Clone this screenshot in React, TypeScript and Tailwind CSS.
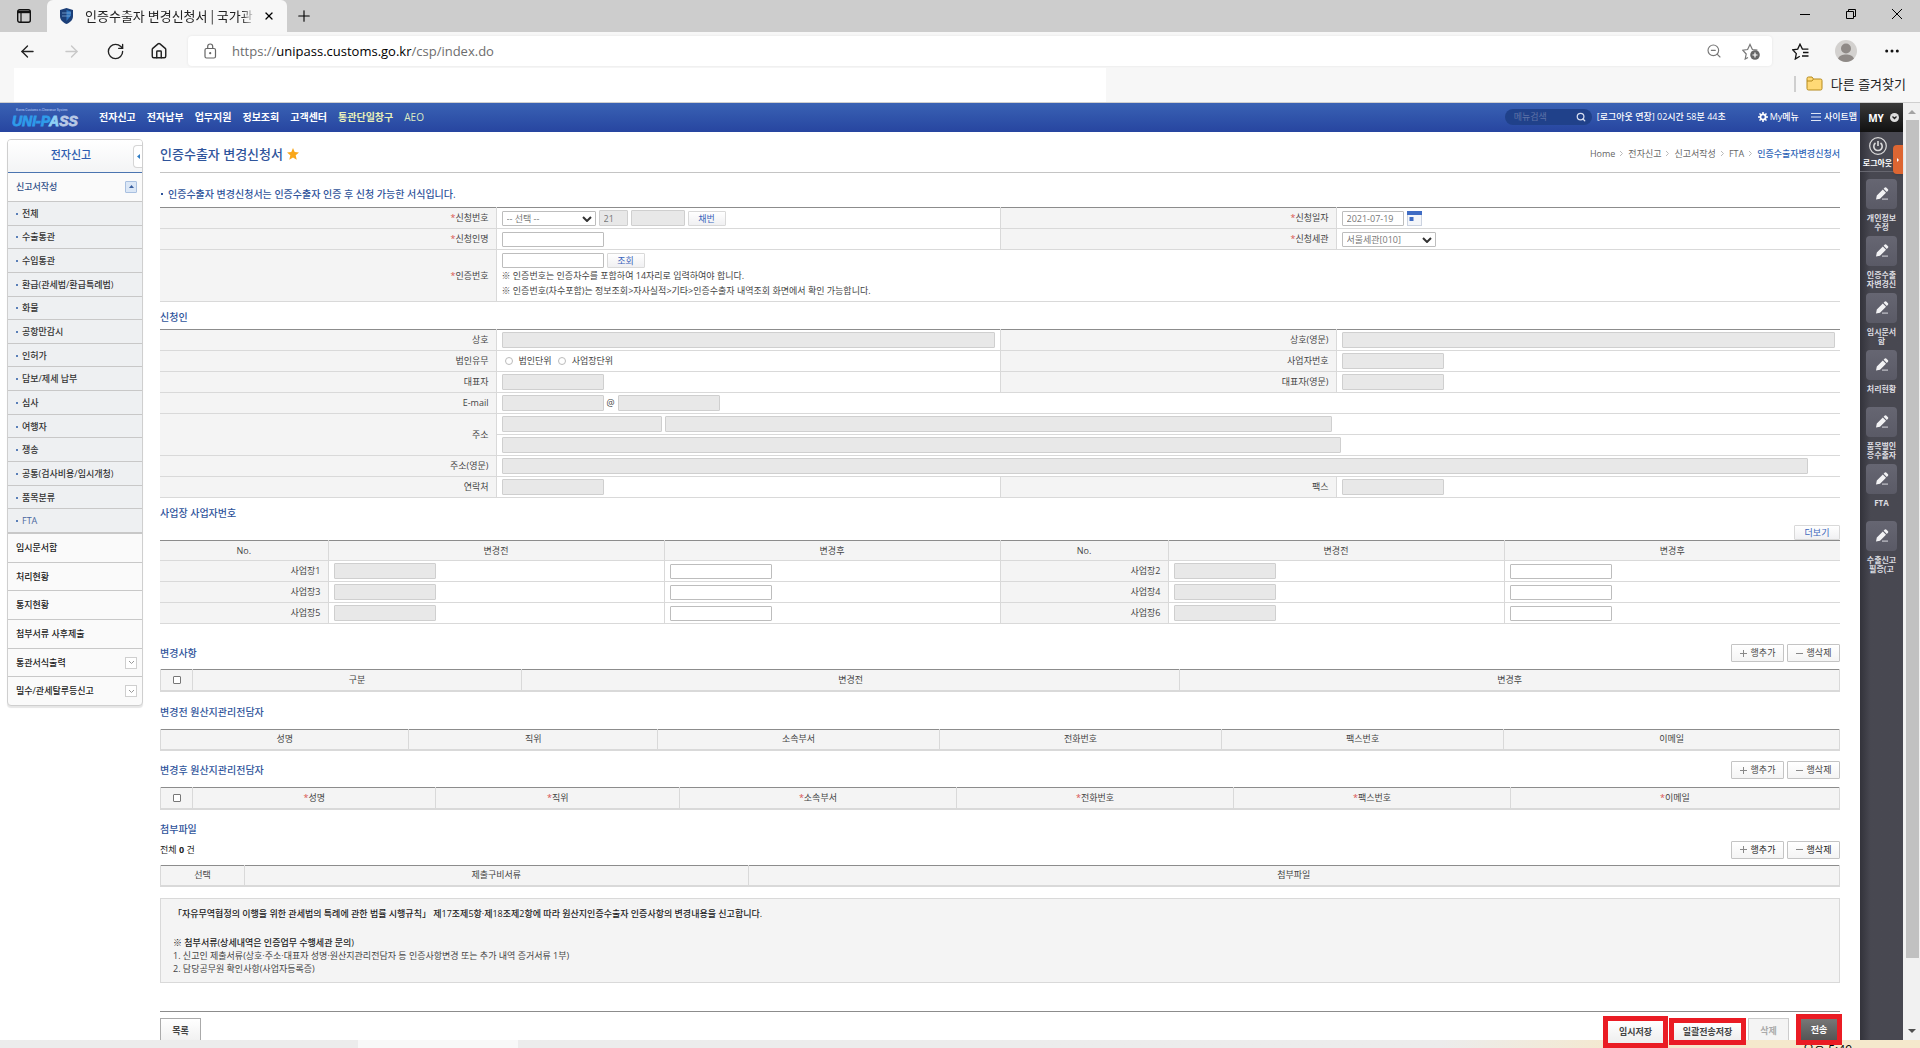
import type { ReactNode } from "react"
import { ArrowLeft, ArrowRight, House, Plus, RotateCw, Search, X, ZoomOut } from "lucide-react"

const topMenus = ["전자신고", "전자납부", "업무지원", "정보조회", "고객센터"]

const docMenus = [
  "전체",
  "수출통관",
  "수입통관",
  "환급(관세법/환급특례법)",
  "화물",
  "공항만감시",
  "인허가",
  "담보/제세 납부",
  "심사",
  "여행자",
  "쟁송",
  "공통(검사비용/임시개청)",
  "품목분류",
  "FTA",
]

const sideMenus = [
  { label: "임시문서함" },
  { label: "처리현황" },
  { label: "통지현황" },
  { label: "첨부서류 사후제출" },
  { label: "통관서식출력", sub: true },
  { label: "밀수/관세탈루등신고", sub: true },
]

const quickMenus = [
  ["개인정보", "수정"],
  ["인증수출", "자변경신"],
  ["임시문서", "함"],
  ["처리현황"],
  ["품목별인", "증수출자"],
  ["FTA"],
  ["수출신고", "필증(고"],
]

const thCls = "border-b border-[#d9d9d9] bg-[#f4f4f4] pr-[7px] text-right font-normal"
const th2Cls = "border-b border-x border-[#d9d9d9] bg-[#f4f4f4] pr-[7px] text-right font-normal"
const tdCls = "border-b border-l border-[#d9d9d9] pl-[5px]"
const grayInput = "h-4 rounded-[1px] border border-[#cfcfcf] bg-[#e8e8e8] px-1 align-middle text-[#777]"
const whiteInput = "h-[15px] rounded-[1px] border border-[#bdbdbd] bg-white px-1 align-middle text-[#777]"

function Req() {
  return <span className="text-[#d9534f]">*</span>
}

function SmallButton({ children, className = "" }: { children: ReactNode; className?: string }) {
  return (
    <button
      className={`h-[15px] rounded-[1px] border border-[#d9d9d9] bg-gradient-to-b from-white to-[#f0f0f2] align-middle leading-[13px] text-[#3c66bb] ${className}`}
    >
      {children}
    </button>
  )
}

function RowButtons() {
  return (
    <div className="flex gap-[3px]">
      <button className="flex h-[18px] w-[53px] items-center justify-center gap-1 rounded-[1px] border border-[#c4c4c4] bg-gradient-to-b from-white to-[#f4f4f4]">
        <svg className="h-[7px] w-[7px]" viewBox="0 0 7 7" stroke="#888">
          <path d="M3.5 0v7M0 3.5h7" />
        </svg>
        행추가
      </button>
      <button className="flex h-[18px] w-[53px] items-center justify-center gap-1 rounded-[1px] border border-[#c4c4c4] bg-gradient-to-b from-white to-[#f4f4f4]">
        <svg className="h-[7px] w-[7px]" viewBox="0 0 7 7" stroke="#888">
          <path d="M0 3.5h7" />
        </svg>
        행삭제
      </button>
    </div>
  )
}

function SectionTitle({ children }: { children: ReactNode }) {
  return <h2 className="text-[10px] leading-4 font-medium text-[#2f549b]">{children}</h2>
}

type Column = { label?: string; width: string; req?: boolean }

function GridTable({ name, columns }: { name: string; columns: Column[] }) {
  return (
    <table className="w-full table-fixed border-t border-t-[#8c8c8c]" aria-label={name}>
      <thead>
        <tr className="h-[21px]">
          {columns.map((c, i) => (
            <th key={i} className={`border-x border-b-2 border-[#d9d9d9] bg-[#f4f4f4] font-normal ${c.width}`}>
              {c.label ? (
                <>
                  {c.req && <Req />}
                  {c.label}
                </>
              ) : (
                <input
                  type="checkbox"
                  aria-label={`${name} 전체선택`}
                  className="mx-auto block h-2 w-2 appearance-none rounded-[1px] border border-[#777] bg-white"
                />
              )}
            </th>
          ))}
        </tr>
      </thead>
    </table>
  )
}

function PlaceCells({ n }: { n: number }) {
  return (
    <>
      <th className={n % 2 ? thCls : th2Cls}>사업장{n}</th>
      <td className={tdCls}>
        <input className={`${grayInput} block w-[102px]`} aria-label={`사업장${n} 변경전`} disabled />
      </td>
      <td className={tdCls}>
        <input className={`${whiteInput} block w-[102px]`} aria-label={`사업장${n} 변경후`} />
      </td>
    </>
  )
}

function BrowserChrome() {
  return (
    <header className="shrink-0 border-b border-[#cfcfcf] bg-[#f7f7f7]">
      <div className="flex h-8 items-end bg-[#cdcdcd]">
        <button className="flex h-8 w-[47px] items-center justify-center" aria-label="탭 작업 메뉴">
          <svg className="h-[14px] w-[14px]" viewBox="0 0 14 14" fill="none" stroke="#111">
            <rect x="0.7" y="0.7" width="12.6" height="12.6" rx="2" strokeWidth="1.4" />
            <path d="M1 3h12" strokeWidth="2.4" />
            <path d="M4 4v9" strokeWidth="1.2" />
          </svg>
        </button>
        <div className="flex h-8 w-60 items-center rounded-t-md bg-[#f7f7f7] px-3">
          <svg className="h-4 w-[15px] shrink-0" viewBox="0 0 15 16">
            <path d="M7.5 0 14 2v6c0 4-3 6.500-6.500 8C4 14.500 1 12 1 8V2z" fill="#1c3f78" />
            <path d="M7.500 2 12 3.500v4L7.500 13z" fill="#2f74bd" />
            <path d="M3 5h9M3 8h8" stroke="#7fa8d6" strokeWidth="0.8" />
          </svg>
          <span className="ml-[11px] w-[172px] overflow-hidden font-['Noto_Sans_CJK_KR',sans-serif] text-[13px] leading-5 whitespace-nowrap text-[#222] [mask-image:linear-gradient(to_right,black_92%,transparent)]">
            인증수출자 변경신청서 | 국가관
          </span>
          <button className="ml-2" aria-label="탭 닫기">
            <X className="h-3 w-3 text-black" strokeWidth={2.5} />
          </button>
        </div>
        <button className="ml-2 flex h-8 items-center" aria-label="새 탭">
          <Plus className="h-[18px] w-[18px] text-black" strokeWidth={1.5} />
        </button>
        <div className="ml-auto flex h-8 items-center pb-1 text-black">
          <button className="flex w-[46px] justify-center" aria-label="최소화">
            <svg className="h-[10px] w-[10px]" viewBox="0 0 10 10" stroke="currentColor">
              <path d="M0 5.500h10" />
            </svg>
          </button>
          <button className="flex w-[46px] justify-center" aria-label="이전 크기로 복원">
            <svg className="h-[10px] w-[10px]" viewBox="0 0 10 10" fill="none" stroke="currentColor">
              <path d="M0.500 2.500h7v7h-7zM2.500 2.500v-2h7v7h-2" />
            </svg>
          </button>
          <button className="flex w-[46px] justify-center" aria-label="닫기">
            <svg className="h-[10px] w-[10px]" viewBox="0 0 10 10" stroke="currentColor">
              <path d="M0 0l10 10M10 0L0 10" />
            </svg>
          </button>
        </div>
      </div>

      <div className="flex h-9 items-center pt-[2px]">
        <div className="flex w-[188px] items-center gap-[25px] pl-[18px] text-[#222]">
          <ArrowLeft className="h-[19px] w-[19px]" strokeWidth={1.7} />
          <ArrowRight className="h-[19px] w-[19px] text-[#c8c8c8]" strokeWidth={1.7} />
          <RotateCw className="h-[19px] w-[19px]" strokeWidth={1.7} />
          <House className="h-[18px] w-[18px]" strokeWidth={1.9} />
        </div>
        <div className="flex h-[30px] flex-1 items-center rounded bg-white pr-3 pl-[14px] shadow-[0_0_3px_rgba(0,0,0,0.08)]">
          <svg className="h-4 w-4" viewBox="0 0 16 16" fill="none" stroke="#666" strokeWidth="1.200">
            <rect x="3" y="5.500" width="10.500" height="9.500" rx="1.500" />
            <path d="M5.700 5.500V3.500q0-2.500 2.500-2.500t2.500 2.500v2" />
            <circle cx="8.200" cy="10.200" r="0.500" fill="#666" />
          </svg>
          <div className="ml-[14px] flex-1 text-[13px] leading-5 text-[#6d6d6d]">
            https://<span className="text-black">unipass.customs.go.kr</span>/csp/index.do
          </div>
          <ZoomOut className="h-4 w-4 text-[#777]" strokeWidth={1.7} />
          <svg className="ml-5 h-[18px] w-[18px]" viewBox="0 0 18 18" fill="none" stroke="#777" strokeWidth="1.2">
            <path d="M6 15.500l-2.800 1.500 1-5L0.700 8.200l4.900-.700L8 2.500l2.400 5 5 .7" />
            <circle cx="13" cy="13" r="4.800" fill="#666" stroke="none" />
            <path d="M13 10.500v5M10.500 13h5" stroke="#fff" />
          </svg>
        </div>
        <div className="flex w-[148px] items-center pl-5">
          <svg className="h-[17px] w-[17px]" viewBox="0 0 17 17" fill="none" stroke="#111" strokeWidth="1.3">
            <path d="M7.800 13.200L3.300 16l1-5.400L0.700 6.800l5-.7L8 1.200l2.400 4.900h6M11 9.500h5.500M10 13h6.500" />
          </svg>
          <svg className="ml-[26px] h-[22px] w-[22px]" viewBox="0 0 22 22">
            <circle cx="11" cy="11" r="11" fill="#d3d1cf" />
            <circle cx="11" cy="8.500" r="5" fill="#8f8a87" />
            <path d="M3 18.500c2-5.500 14-5.500 16 0a11 11 0 0 1-16 0z" fill="#8f8a87" />
          </svg>
          <svg className="ml-7 h-1 w-[14px]" viewBox="0 0 14 4" fill="#111">
            <circle cx="1.700" cy="2" r="1.500" />
            <circle cx="7" cy="2" r="1.500" />
            <circle cx="12.300" cy="2" r="1.500" />
          </svg>
        </div>
      </div>

      <div className="flex h-[34px] items-center pl-[14px]">
        <div className="h-[34px] w-[57.3%] bg-white" />
        <div className="mr-[14px] mb-[3px] ml-auto flex items-center border-l-2 border-[#cfcfcf] pl-[10px] text-[13px] leading-4 text-[#222]">
          <svg className="mr-2 h-[15px] w-[17px]" viewBox="0 0 17 15">
            <path d="M1 2.500Q1 1 2.500 1H6l1.500 2h7Q16 3 16 4.500v8q0 1.500-1.500 1.500h-12Q1 14 1 12.500z" fill="#ffd976" stroke="#b58a1d" />
            <path d="M1 5h5l1.500-2" fill="none" stroke="#b58a1d" />
          </svg>
          다른 즐겨찾기
        </div>
      </div>
    </header>
  )
}

function Logo() {
  return (
    <a href="#" className="flex h-[29px] w-[99px] items-center pt-[2px] pl-3" aria-label="UNI-PASS">
      <svg className="h-[22px] w-[72px]" viewBox="0 0 72 22">
        <text x="4" y="4" fontSize="3" fill="#9fb9ea" fontFamily="Liberation Sans, sans-serif">
          Korea Customs e-Clearance System
        </text>
        <text x="0" y="19" fontSize="14" fontWeight="700" fontStyle="italic" fill="#2f9bea" stroke="#2f9bea" strokeWidth="0.8" fontFamily="Liberation Sans, sans-serif">
          UNI-P<tspan fill="#8fd0f5" stroke="#8fd0f5">A</tspan><tspan fill="#b9c9e6" stroke="#b9c9e6">SS</tspan>
        </text>
      </svg>
    </a>
  )
}

function TopBar() {
  return (
    <nav className="flex h-[29px] items-center bg-gradient-to-b from-[#3a62b4] to-[#2745a0] pb-[2px] text-[10px] font-bold text-white">
      <Logo />
      <ul className="flex gap-[11px]">
        {topMenus.map((m) => (
          <li key={m}>
            <a href="#">{m}</a>
          </li>
        ))}
        <li>
          <a href="#" className="text-[#e9f0b8]">통관단일창구</a>
        </li>
        <li>
          <a href="#" className="font-medium text-[#dcebc4]">AEO</a>
        </li>
      </ul>
      <div className="ml-auto flex items-center pr-[3px] text-[9px] font-medium">
        <div className="flex h-4 w-[87px] items-center rounded-full bg-[#20418a] pr-[6px] pl-[9px]">
          <input
            aria-label="메뉴검색"
            placeholder="메뉴검색"
            className="w-0 flex-1 bg-transparent font-normal outline-none placeholder:text-[#5f73a8]"
          />
          <Search className="h-[10px] w-[10px] text-[#d7def0]" strokeWidth={3} />
        </div>
        <a href="#" className="ml-[5px]">[로그아웃 연장] 02시간 58분 44초</a>
        <a href="#" className="ml-8 flex items-center gap-[2px]">
          <svg className="h-[10px] w-[10px]" viewBox="0 0 10 10" fill="none" stroke="#fff">
            <circle cx="5" cy="5" r="2.600" strokeWidth="1.800" />
            <path d="M5 0v2M5 8v2M0 5h2M8 5h2M1.500 1.500l1.300 1.300M7.200 7.200l1.300 1.300M8.500 1.500L7.200 2.800M2.800 7.200L1.500 8.500" strokeWidth="1.500" />
          </svg>
          My메뉴
        </a>
        <a href="#" className="ml-3 flex items-center gap-[3px]">
          <svg className="h-2 w-[10px]" viewBox="0 0 10 8" stroke="#dfe6f5">
            <path d="M0 .5h10M0 4h10M0 7.500h10" />
          </svg>
          사이트맵
        </a>
      </div>
    </nav>
  )
}

function Sidebar() {
  return (
    <aside className="w-[136px] shrink-0 self-start overflow-hidden rounded border border-[#cfcfcf] bg-[#fafafa] font-medium text-[#333] shadow-[0_2px_1px_#e6e6e6]">
      <div className="relative flex h-[33px] items-center border-b border-[#4a74b0] bg-gradient-to-b from-white to-[#f3f4f5] pb-[2px]">
        <h2 className="flex-1 pr-2 text-center text-[11px] text-[#2d5cb0]">
          전자신고
        </h2>
        <button
          className="absolute top-[5px] right-0 flex h-[23px] w-[9px] items-center justify-center rounded-l-sm border border-r-0 border-[#d5d5d5] bg-white"
          aria-label="메뉴 접기"
        >
          <svg className="h-[5px] w-[3px]" viewBox="0 0 3 5" fill="#2f7cc4">
            <path d="M3 0v5L0 2.500z" />
          </svg>
        </button>
      </div>
      <div className="flex h-[29px] items-center justify-between border-b border-[#c8c8c8] pr-[5px] pb-px pl-2 text-[#2f4f88]">
        신고서작성
        <button className="flex h-3 w-3 items-center justify-center rounded-[1px] border border-[#a9c0e0] bg-[#dbe7f6]" aria-label="접기">
          <svg className="h-[3px] w-[5px]" viewBox="0 0 5 3" fill="#3a5f9e">
            <path d="M0 3h5L2.500 0z" />
          </svg>
        </button>
      </div>
      <ul className="flex min-h-[332px] flex-col border-b-2 border-[#c8c8c8] bg-[#eef0f2]">
        {docMenus.map((m) => (
          <li key={m} className="flex flex-1 items-center border-b border-[#c8c8c8] pt-px pl-2 last:border-b-0">
            <span className="mr-1 h-[2px] w-[2px] bg-[#5a7fb8]" />
            <a href="#" className={m === "FTA" ? "text-[#4a66a0]" : ""}>{m}</a>
          </li>
        ))}
      </ul>
      <ul className="flex min-h-[171px] flex-col text-[#222]">
        {sideMenus.map((m) => (
          <li key={m.label} className="flex flex-1 items-center justify-between border-b border-[#c8c8c8] pr-[5px] pl-2 last:border-b-0">
            <a href="#">{m.label}</a>
            {m.sub && (
              <span className="flex h-3 w-3 items-center justify-center border border-[#cfcfcf] bg-white">
                <svg className="h-[3px] w-[5px]" viewBox="0 0 5 3" fill="none" stroke="#999">
                  <path d="M0 0l2.500 2.500L5 0" />
                </svg>
              </span>
            )}
          </li>
        ))}
      </ul>
    </aside>
  )
}

function Select({ id, value }: { id: string; value: string }) {
  return (
    <span className="relative inline-flex align-middle">
      <select id={id} className="h-[15px] w-[94px] appearance-none rounded-[1px] border border-[#bdbdbd] bg-white pl-1 leading-[13px] text-[#777]">
        <option>{value}</option>
      </select>
      <svg className="pointer-events-none absolute top-[5px] right-1 h-[6px] w-[10px]" viewBox="0 0 10 6" fill="none" stroke="#333" strokeWidth="2">
        <path d="M1 1l4 4 4-4" />
      </svg>
    </span>
  )
}

function ApplyForm() {
  return (
    <table className="mt-[5px] w-full table-fixed border-t border-[#8c8c8c]">
      <colgroup>
        <col className="w-[20%]" />
        <col className="w-[30%]" />
        <col className="w-[20%]" />
        <col className="w-[30%]" />
      </colgroup>
      <tbody>
        <tr className="h-[21px]">
          <th className={thCls}><Req /><label htmlFor="applyNo">신청번호</label></th>
          <td className={tdCls}>
            <div className="flex items-center gap-[3px]">
              <Select id="applyNo" value="-- 선택 --" />
              <input className={`${grayInput} w-[29px]`} aria-label="신청번호 연도" defaultValue="21" disabled />
              <input className={`${grayInput} w-[54px]`} aria-label="신청번호 일련번호" disabled />
              <SmallButton className="w-[38px]">채번</SmallButton>
            </div>
          </td>
          <th className={th2Cls}><Req /><label htmlFor="applyDate">신청일자</label></th>
          <td className={tdCls}>
            <div className="flex items-center gap-[3px]">
              <input id="applyDate" className={`${whiteInput} w-[62px]`} defaultValue="2021-07-19" />
              <button aria-label="달력">
                <svg className="h-[15px] w-[15px]" viewBox="0 0 15 15">
                  <rect x="0.500" y="0.500" width="14" height="14" fill="#f4f6fa" stroke="#ccd3e0" />
                  <rect width="15" height="4" fill="#3f6cc4" />
                  <rect x="2.500" y="6" width="4" height="4" fill="#3f6cc4" />
                </svg>
              </button>
            </div>
          </td>
        </tr>
        <tr className="h-[21px]">
          <th className={thCls}><Req /><label htmlFor="applicant">신청인명</label></th>
          <td className={tdCls}>
            <input id="applicant" className={`${whiteInput} block w-[102px]`} />
          </td>
          <th className={th2Cls}><Req /><label htmlFor="customs">신청세관</label></th>
          <td className={tdCls}>
            <div className="flex">
              <Select id="customs" value="서울세관[010]" />
            </div>
          </td>
        </tr>
        <tr className="h-[52px]">
          <th className={thCls}><Req /><label htmlFor="certNo">인증번호</label></th>
          <td className={tdCls} colSpan={3}>
            <div className="flex items-center gap-[3px]">
              <input id="certNo" className={`${whiteInput} w-[102px]`} />
              <SmallButton className="w-[38px]">조회</SmallButton>
            </div>
            <p className="leading-[15px]">※ 인증번호는 인증차수를 포함하여 14자리로 입력하여야 합니다.</p>
            <p className="leading-[15px]">※ 인증번호(차수포함)는 정보조회&gt;자사실적&gt;기타&gt;인증수출자 내역조회 화면에서 확인 가능합니다.</p>
          </td>
        </tr>
      </tbody>
    </table>
  )
}

function ApplicantForm() {
  return (
    <table className="mt-1 w-full table-fixed border-t border-[#8c8c8c]">
      <colgroup>
        <col className="w-[20%]" />
        <col className="w-[30%]" />
        <col className="w-[20%]" />
        <col className="w-[30%]" />
      </colgroup>
      <tbody>
        <tr className="h-[21px]">
          <th className={thCls}><label htmlFor="firm">상호</label></th>
          <td className={`${tdCls} pr-[5px]`}><input id="firm" className={`${grayInput} block w-full`} disabled /></td>
          <th className={th2Cls}><label htmlFor="firmEn">상호(영문)</label></th>
          <td className={`${tdCls} pr-[5px]`}><input id="firmEn" className={`${grayInput} block w-full`} disabled /></td>
        </tr>
        <tr className="h-[21px]">
          <th className={thCls}>법인유무</th>
          <td className={tdCls}>
            <div className="flex items-center gap-[6px] pl-[3px]">
              <input id="corp" type="radio" name="unit" className="h-2 w-2 appearance-none rounded-full border border-[#bbb]" disabled />
              <label htmlFor="corp">법인단위</label>
              <input id="place" type="radio" name="unit" className="h-2 w-2 appearance-none rounded-full border border-[#bbb]" disabled />
              <label htmlFor="place">사업장단위</label>
            </div>
          </td>
          <th className={th2Cls}><label htmlFor="bizNo">사업자번호</label></th>
          <td className={tdCls}><input id="bizNo" className={`${grayInput} block w-[102px]`} disabled /></td>
        </tr>
        <tr className="h-[21px]">
          <th className={thCls}><label htmlFor="ceo">대표자</label></th>
          <td className={tdCls}><input id="ceo" className={`${grayInput} block w-[102px]`} disabled /></td>
          <th className={th2Cls}><label htmlFor="ceoEn">대표자(영문)</label></th>
          <td className={tdCls}><input id="ceoEn" className={`${grayInput} block w-[102px]`} disabled /></td>
        </tr>
        <tr className="h-[21px]">
          <th className={thCls}><label htmlFor="mail">E-mail</label></th>
          <td className={tdCls} colSpan={3}>
            <div className="flex items-center gap-[3px]">
              <input id="mail" className={`${grayInput} w-[102px]`} disabled />
              @
              <input className={`${grayInput} w-[102px]`} aria-label="E-mail 도메인" disabled />
            </div>
          </td>
        </tr>
        <tr className="h-[21px]">
          <th className={thCls} rowSpan={2}><label htmlFor="addr">주소</label></th>
          <td className={tdCls} colSpan={3}>
            <div className="flex gap-[3px]">
              <input id="addr" className={`${grayInput} w-[12%]`} disabled />
              <input className={`${grayInput} w-[49.8%]`} aria-label="기본주소" disabled />
            </div>
          </td>
        </tr>
        <tr className="h-[21px]">
          <td className={tdCls} colSpan={3}>
            <input className={`${grayInput} block w-[62.7%]`} aria-label="상세주소" disabled />
          </td>
        </tr>
        <tr className="h-[21px]">
          <th className={thCls}><label htmlFor="addrEn">주소(영문)</label></th>
          <td className={tdCls} colSpan={3}>
            <input id="addrEn" className={`${grayInput} block w-[97.6%]`} disabled />
          </td>
        </tr>
        <tr className="h-[21px]">
          <th className={thCls}><label htmlFor="tel">연락처</label></th>
          <td className={tdCls}><input id="tel" className={`${grayInput} block w-[102px]`} disabled /></td>
          <th className={th2Cls}><label htmlFor="fax">팩스</label></th>
          <td className={tdCls}><input id="fax" className={`${grayInput} block w-[102px]`} disabled /></td>
        </tr>
      </tbody>
    </table>
  )
}

function PlaceTable() {
  const head = "border-b border-[#d9d9d9] bg-[#f4f4f4] font-normal"
  return (
    <table className="w-full table-fixed border-t border-t-[#8c8c8c]">
      <thead>
        <tr className="h-5">
          <th className={`${head} w-[10%]`}>No.</th>
          <th className={`${head} w-[20%] border-l`}>변경전</th>
          <th className={`${head} w-[20%] border-l`}>변경후</th>
          <th className={`${head} w-[10%] border-l`}>No.</th>
          <th className={`${head} w-[20%] border-l`}>변경전</th>
          <th className={`${head} w-[20%] border-l`}>변경후</th>
        </tr>
      </thead>
      <tbody>
        {[1, 3, 5].map((n) => (
          <tr key={n} className="h-[21px]">
            <PlaceCells n={n} />
            <PlaceCells n={n + 1} />
          </tr>
        ))}
      </tbody>
    </table>
  )
}

function Breadcrumb() {
  const sep = (
    <svg className="h-[5px] w-[3px]" viewBox="0 0 3 5" fill="none" stroke="#bbb">
      <path d="M0 0l2.500 2.500L0 5" />
    </svg>
  )
  return (
    <div className="flex items-center gap-[5px] text-[#666]">
      <a href="#">Home</a>{sep}
      <a href="#">전자신고</a>{sep}
      <a href="#">신고서작성</a>{sep}
      <a href="#">FTA</a>{sep}
      <a href="#" className="font-medium text-[#2f66b8]">인증수출자변경신청서</a>
    </div>
  )
}

function Content() {
  return (
    <main className="min-w-0 flex-1 pr-5 pl-[17px]">
      <div className="flex h-[34px] items-center justify-between border-b border-[#c4c4c4] pb-1">
        <h1 className="flex items-center gap-1 text-[13px] font-medium text-[#2f549b]">
          인증수출자 변경신청서
          <svg className="h-3 w-3" viewBox="0 0 12 12" fill="#f9a71a">
            <path d="M6 0l1.700 4 4.300.4L8.700 7.300l1 4.400L6 9.400l-3.700 2.300 1-4.400L0 4.400 4.300 4z" />
          </svg>
        </h1>
        <Breadcrumb />
      </div>

      <div className="mt-[13px] flex items-center">
        <span className="mr-[5px] ml-[1px] h-[2px] w-[2px] bg-[#2f549b]" />
        <SectionTitle>인증수출자 변경신청서는 인증수출자 인증 후 신청 가능한 서식입니다.</SectionTitle>
      </div>
      <ApplyForm />

      <div className="mt-[7px]">
        <SectionTitle>신청인</SectionTitle>
      </div>
      <ApplicantForm />

      <div className="mt-[7px]">
        <SectionTitle>사업장 사업자번호</SectionTitle>
      </div>
      <div className="mt-1 flex justify-end">
        <SmallButton className="w-[46px]">더보기</SmallButton>
      </div>
      <PlaceTable />

      <div className="mt-5 mb-[7px] flex items-center justify-between">
        <SectionTitle>변경사항</SectionTitle>
        <RowButtons />
      </div>
      <GridTable
        name="변경사항"
        columns={[
          { width: "w-8" },
          { label: "구분", width: "w-[19.6%]" },
          { label: "변경전", width: "w-[39.2%]" },
          { label: "변경후", width: "w-auto" },
        ]}
      />

      <div className="mt-3 mb-[9px]">
        <SectionTitle>변경전 원산지관리전담자</SectionTitle>
      </div>
      <GridTable
        name="변경전 원산지관리전담자"
        columns={[
          { label: "성명", width: "w-[14.8%]" },
          { label: "직위", width: "w-[14.8%]" },
          { label: "소속부서", width: "w-[16.8%]" },
          { label: "전화번호", width: "w-[16.8%]" },
          { label: "팩스번호", width: "w-[16.8%]" },
          { label: "이메일", width: "w-auto" },
        ]}
      />

      <div className="mt-[10px] mb-2 flex items-center justify-between">
        <SectionTitle>변경후 원산지관리전담자</SectionTitle>
        <RowButtons />
      </div>
      <GridTable
        name="변경후 원산지관리전담자"
        columns={[
          { width: "w-8" },
          { label: "성명", width: "w-[14.5%]", req: true },
          { label: "직위", width: "w-[14.5%]", req: true },
          { label: "소속부서", width: "w-[16.5%]", req: true },
          { label: "전화번호", width: "w-[16.5%]", req: true },
          { label: "팩스번호", width: "w-[16.5%]", req: true },
          { label: "이메일", width: "w-auto", req: true },
        ]}
      />

      <div className="mt-[11px]">
        <SectionTitle>첨부파일</SectionTitle>
      </div>
      <div className="mt-1 mb-[6px] flex items-center justify-between text-[#222]">
        <span>전체 <b>0</b> 건</span>
        <RowButtons />
      </div>
      <GridTable
        name="첨부파일"
        columns={[
          { label: "선택", width: "w-[5%]" },
          { label: "제출구비서류", width: "w-[30%]" },
          { label: "첨부파일", width: "w-auto" },
        ]}
      />

      <section className="mt-[11px] border border-[#d9d9d9] bg-[#f4f4f4] px-3 pt-2 pb-[7px] leading-[13px]">
        <p className="font-medium text-[#222]">「자유무역협정의 이행을 위한 관세법의 특례에 관한 법률 시행규칙」 제17조제5항·제18조제2항에 따라 원산지인증수출자 인증사항의 변경내용을 신고합니다.</p>
        <p className="mt-4 font-medium text-[#222]">※ 첨부서류(상세내역은 인증업무 수행세관 문의)</p>
        <p>1. 신고인 제출서류(상호·주소·대표자 성명·원산지관리전담자 등 인증사항변경 또는 추가 내역 증거서류 1부)</p>
        <p>2. 담당공무원 확인사항(사업자등록증)</p>
      </section>

      <div className="mt-7 flex items-start justify-between border-t border-[#8c8c8c] font-bold">
        <button className="mt-[6px] h-7 w-[41px] border border-[#aaa] bg-gradient-to-b from-white to-[#eee] pb-[2px]">
          목록
        </button>
        <div className="-mr-[2px] flex items-start">
          <span className="relative z-20 mt-1 border-[5px] border-[#ea1c24]">
            <button className="block h-[22px] w-[55px] bg-gradient-to-b from-white to-[#eee]">임시저장</button>
          </span>
          <span className="relative z-20 mt-[6px] ml-px border-[5px] border-[#ea1c24]">
            <button className="block h-[17px] w-[67px] bg-gradient-to-b from-white to-[#eee]">일괄전송저장</button>
          </span>
          <button className="mt-[6px] ml-[2px] h-7 w-[41px] border border-[#ccc] bg-[#f4f4f4] pb-[2px] text-[#aaa]" disabled>
            삭제
          </button>
          <span className="relative z-20 mt-[2px] ml-[7px] border-[5px] border-[#ea1c24]">
            <button className="block h-[21px] w-[36px] bg-gradient-to-b from-[#777] to-[#555] text-white">전송</button>
          </span>
        </div>
      </div>
    </main>
  )
}

function QuickBar() {
  return (
    <aside className="relative w-[43px] shrink-0 bg-gradient-to-r from-[#33333b] to-[#484851] to-25% font-bold text-white">
      <div className="flex h-[29px] items-center justify-center gap-[6px] bg-gradient-to-b from-[#3a3a3a] to-[#111] pl-1 text-[10px]">
        MY
        <svg className="h-[9px] w-[9px]" viewBox="0 0 9 9">
          <circle cx="4.500" cy="4.500" r="4.500" fill="#ddd" />
          <path d="M2.500 3.500l2 2 2-2" fill="none" stroke="#222" strokeWidth="1.300" />
        </svg>
      </div>
      <button className="flex h-10 w-full flex-col items-center border-b border-[#66666f] pt-[5px] pr-2 text-[8px] leading-3">
        <svg className="h-[18px] w-[18px] shrink-0" viewBox="0 0 18 18" fill="none" stroke="#ddd">
          <circle cx="9" cy="9" r="8.300" strokeWidth="1.200" />
          <path d="M6.500 6a4.200 4.200 0 1 0 5 0M9 4v5" strokeWidth="1.600" />
        </svg>
        <span className="mt-[2px]">로그아웃</span>
      </button>
      <button className="absolute top-[42px] right-0 flex h-[29px] w-[10px] items-center justify-center rounded-l-sm bg-[#dd6632] shadow" aria-label="퀵메뉴 열기">
        <svg className="h-1 w-[2px]" viewBox="0 0 2 4" fill="#fff">
          <path d="M0 0l2 2-2 2z" />
        </svg>
      </button>
      <ul className="flex flex-col items-center pt-[7px] text-center text-[8px] leading-[9px] text-[#dcdce0]">
        {quickMenus.map((lines) => (
          <li key={lines[0]} className="h-[57px]">
            <a href="#" className="mx-auto mb-1 flex h-[30px] w-[31px] items-center justify-center rounded-sm bg-gradient-to-b from-[#666672] to-[#5a5a66]" aria-label={lines.join("")}>
              <svg className="h-4 w-4" viewBox="0 0 16 16" fill="#f2f2f4">
                <path d="M2 13.500l.8-4 6-6 3.200 3.200-6 6zM9.600 2.700l1.200-1.200q.7-.6 1.400 0l1.800 1.800q.6.700 0 1.400l-1.200 1.200z" />
                <path d="M8 12.500h6v1.200H8z" fill="#c4c4cc" />
              </svg>
            </a>
            {lines.map((l) => (
              <div key={l}>{l}</div>
            ))}
          </li>
        ))}
      </ul>
    </aside>
  )
}

function ScrollBar() {
  return (
    <div className="flex w-[17px] shrink-0 flex-col items-center bg-[#f1f1f1] pl-[1px]" aria-hidden="true">
      <svg className="h-[17px] w-2" viewBox="0 0 8 17" fill="#a3a3a3">
        <path d="M0 11h8L4 7z" />
      </svg>
      <div className="w-[13px] flex-[9] bg-[#c1c1c1]" />
      <div className="flex-[0.7]" />
      <svg className="h-[17px] w-2" viewBox="0 0 8 17" fill="#505050">
        <path d="M0 6h8l-4 4z" />
      </svg>
    </div>
  )
}

export default function App() {
  return (
    <div className="flex h-screen flex-col overflow-hidden bg-white font-['Open_Sans','Noto_Sans_CJK_KR',sans-serif] text-[9px] leading-3 text-[#444]">
      <BrowserChrome />
      <div className="flex min-h-0 flex-1">
        <div className="min-w-0 flex-1">
          <TopBar />
          <div className="flex pt-[7px] pl-[7px]">
            <Sidebar />
            <Content />
          </div>
        </div>
        <QuickBar />
        <ScrollBar />
      </div>
      <footer className="relative z-10 flex h-2 shrink-0 items-start bg-gradient-to-r from-[#ececec] from-75% to-[#f5e8cc] to-85%">
        <div className="ml-[358px] h-2 w-40 bg-[#f8f8f8]" />
        <div className="mr-[68px] ml-auto h-2 overflow-hidden pt-[2px] text-[12px] leading-4 text-black">오후 5:49</div>
      </footer>
    </div>
  )
}
